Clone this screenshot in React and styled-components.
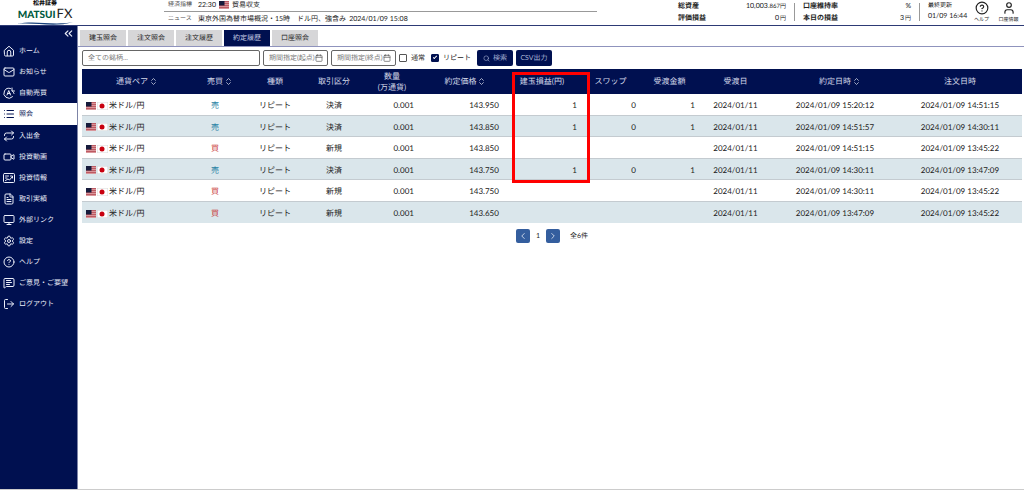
import React from "react";
import styled, { createGlobalStyle } from "styled-components";
import {
  Mail, List, Repeat, Video, FileText, Monitor, Settings, CircleHelp,
  MessageSquareText, LogOut, ChevronsLeft, ChevronLeft, ChevronRight,
  ChevronsUpDown, Calendar, Search, User,
} from "lucide-react";

const navy = "#001050";
const font = '"Lato", "Noto Sans CJK JP", sans-serif';

const GlobalStyle = createGlobalStyle`
  *, *::before, *::after { box-sizing: border-box; }
  body {
    margin: 0;
    background: #fff;
    color: #222;
    font: 7px/10px ${font};
    text-rendering: geometricPrecision;
  }
  button, input { font: inherit; text-rendering: inherit; }
  h1, ul { margin: 0; padding: 0; }
  svg { display: block; flex: none; }
`;

const Page = styled.div`
  min-height: 100vh;
  display: flex;
  flex-direction: column;
  border-bottom: 1px solid #ccc;
`;

const Header = styled.header`
  display: flex;
  justify-content: space-between;
  height: 26px;
  border-bottom: 1px solid #2d3a75;
`;

const Brand = styled.div`
  display: flex;
  flex: 0 0 164px;
`;

const Logo = styled.h1`
  width: 90px;
  display: flex;
  flex-direction: column;
  align-items: center;
  font-size: 6px;
  line-height: 7px;
  font-weight: 900;
  color: #111;
`;

const LogoName = styled.span`
  display: flex;
  align-items: baseline;
  gap: 1px;
  font: 900 10px/12px ${font};
  color: #005a40;
`;

const LogoSuffix = styled.span`
  font: 400 13px/12px ${font};
  color: #222;
`;

const Ticker = styled.div`
  flex: 0 1 433px;
  margin-right: auto;
  white-space: nowrap;
`;

const TickerRow = styled.div`
  display: flex;
  align-items: center;
  gap: 3px;
  height: ${(p) => (p.$first ? 12 : 14)}px;
  padding: ${(p) => (p.$first ? "0 4px 2px" : "0 4px")};
  border-bottom: ${(p) => (p.$first ? "1px solid #999" : "0")};
`;

const TickerLabel = styled.span`
  width: 27px;
  font-size: 6px;
  color: #555;
`;

const Status = styled.div`
  display: flex;
  align-items: flex-start;
  padding-right: 2px;
  white-space: nowrap;
`;

const StatGroup = styled.dl`
  display: grid;
  grid-template-columns: auto 1fr;
  grid-auto-rows: 12px;
  width: ${(p) => p.$width}px;
  margin: 0;
  padding: 1px 8px 0 0;
  dt { font-weight: 700; }
  dd { margin: 0; text-align: right; }
  small { font-size: 6px; }
`;

const Unit = styled.small`
  margin-left: 1px;
`;

const Divider = styled.span`
  width: 1px;
  height: 18px;
  margin: 3px 8px 0 0;
  background: #999;
`;

const Updated = styled.div`
  width: 40px;
  padding-top: 1px;
  line-height: 10px;
  small { display: block; font-size: 6px; }
`;

const HeaderButton = styled.button`
  display: flex;
  flex-direction: column;
  align-items: center;
  gap: 2px;
  width: 27px;
  padding: 1px 0 0;
  border: 0;
  background: none;
  color: #222;
  font-size: 5px;
  line-height: 7px;
`;

const Body = styled.div`
  flex: 1;
  display: flex;
`;

const Sidebar = styled.nav`
  flex: 0 0 78px;
  border-right: 1px solid #7d84a6;
  background: ${navy};
  color: #eceffa;
  ul { list-style: none; }
`;

const Collapse = styled.button`
  display: block;
  margin-left: auto;
  height: 14px;
  padding: 0 2px;
  border: 0;
  background: none;
  color: inherit;
`;

const NavLink = styled.a`
  display: flex;
  align-items: center;
  gap: 4px;
  height: ${(p) => (p.$active ? 22 : 21)}px;
  padding-left: 3px;
  color: ${(p) => (p.$active ? navy : "inherit")};
  background: ${(p) => (p.$active ? "#fff" : "none")};
  text-decoration: none;
`;

const Main = styled.main`
  flex: 1;
  min-width: 0;
`;

const Tabs = styled.div`
  display: flex;
  gap: 2px;
  padding: 4px 2px 0;
  border-bottom: 1px solid #8f93bd;
`;

const Tab = styled.button`
  width: 46px;
  height: 16px;
  padding: 0;
  border: 0;
  background: ${(p) => (p.$active ? navy : "#d6d6d8")};
  color: ${(p) => (p.$active ? "#c9d0e8" : "#222")};
`;

const Filters = styled.form`
  display: flex;
  align-items: center;
  gap: 3px;
  padding: 3px 4px;
`;

const Field = styled.label`
  display: flex;
  align-items: center;
  width: ${(p) => p.$width}px;
  height: 16px;
  padding: 0 4px 0 5px;
  border: 1px solid #666;
  border-radius: 2px;
  color: #555;
  input {
    flex: 1;
    min-width: 0;
    padding: 0;
    border: 0;
    outline: 0;
    background: none;
  }
  input::placeholder { color: #777; }
`;

const Check = styled.label`
  display: flex;
  align-items: center;
  gap: 4px;
  margin-right: 3px;
  input {
    appearance: none;
    width: 8px;
    height: 8px;
    margin: 0;
    border: 1px solid #555;
    border-radius: 1px;
    background: #fff;
  }
  input:checked {
    border-color: ${navy};
    background: ${navy};
  }
  input:checked::after {
    content: "";
    display: block;
    width: 2px;
    height: 4px;
    margin: 0 2px;
    border: solid #fff;
    border-width: 0 1px 1px 0;
    transform: rotate(45deg);
  }
`;

const Action = styled.button`
  display: flex;
  align-items: center;
  justify-content: center;
  gap: 3px;
  width: 36px;
  height: 16px;
  padding: 0;
  border: 0;
  border-radius: 2px;
  background: ${navy};
  color: #a9b4d6;
`;

const TableArea = styled.div`
  position: relative;
  margin: 0 2px 0 4px;
`;

const Table = styled.table`
  width: 100%;
  table-layout: fixed;
  border-collapse: separate;
  border-spacing: 0;
  font-size: 8px;
  line-height: 11px;
  text-align: center;
  white-space: nowrap;
  th {
    height: 25px;
    padding: 0;
    background: ${navy};
    color: #d5daea;
    font-weight: 400;
  }
  td {
    height: 22px;
    padding: 2px 4px 0;
    border-bottom: 1px solid #c4cbd0;
  }
  tbody tr:nth-child(even) td {
    height: 21px;
    background: #dae6eb;
  }
  tbody tr:last-child td { border-bottom: 0; }
`;

const HeadLabel = styled.span`
  display: inline-flex;
  align-items: center;
  white-space: pre-line;
  svg { margin: 0 -10px 0 1px; }
`;

const NumberCell = styled.td`
  text-align: right;
`;

const SideCell = styled.td`
  color: ${(p) => (p.$buy ? "#c62a2a" : "#1d7fa3")};
`;

const Pair = styled.span`
  display: flex;
  align-items: center;
  gap: 1px;
`;

const Highlight = styled.div`
  position: absolute;
  top: 3px;
  left: 45.7%;
  width: 8.3%;
  height: 111px;
  border: 3px solid #f00;
  pointer-events: none;
`;

const Pager = styled.div`
  display: flex;
  align-items: center;
  justify-content: center;
  gap: 6px;
  margin: 6px 2px 0 4px;
`;

const PageButton = styled.button`
  display: flex;
  align-items: center;
  justify-content: center;
  width: 14px;
  height: 14px;
  padding: 0;
  border: 0;
  border-radius: 2px;
  background: #345e9e;
  color: #dfe6f3;
`;

const Total = styled.span`
  margin-left: 4px;
`;

function UsFlag() {
  return (
    <svg width="10" height="8" viewBox="0 0 20 16" aria-label="US">
      <rect width="20" height="16" fill="#d9969b" />
      <path d="M0 1h20M0 5h20M0 9h20M0 13h20" stroke="#bd5a62" strokeWidth="2" />
      <rect width="11" height="9" fill="#161b3c" />
    </svg>
  );
}

function JpFlag() {
  return (
    <svg width="11" height="8" viewBox="0 0 22 16" aria-label="JP">
      <rect x=".5" y=".5" width="21" height="15" fill="#fff" stroke="#d8d8d8" />
      <circle cx="10" cy="8" r="5" fill="#c8000f" />
    </svg>
  );
}

function Icon24({ size, children }) {
  return (
    <svg width={size} height={size} viewBox="0 0 24 24" fill="none" stroke="currentColor" strokeWidth="2" strokeLinecap="round" strokeLinejoin="round">
      {children}
    </svg>
  );
}

function Home({ size }) {
  return (
    <Icon24 size={size}>
      <path d="M3 10.5 12 2.5l9 8V20a2 2 0 0 1-2 2H5a2 2 0 0 1-2-2Z" />
      <path d="M8.5 21.5V14a3.5 3.5 0 0 1 7 0v7.500" />
    </Icon24>
  );
}

function AutoTrade({ size }) {
  return (
    <Icon24 size={size}>
      <path d="M15 3A10 10 0 1 0 19 19.500" />
      <path d="M18 2v6h5M18 8c2 1 3.500 3 4 5" />
      <path d="M8 16l3.500-9 3.500 9M9 13h5" />
    </Icon24>
  );
}

function NewsBoard({ size }) {
  return (
    <Icon24 size={size}>
      <rect x="1" y="3" width="22" height="18" rx="2" />
      <path d="M5 8h6M5 12h3M5 17l5-3 3 2 6-7M15 8h4v4" />
    </Icon24>
  );
}

const menu = [
  ["ホーム", Home], ["お知らせ", Mail], ["自動売買", AutoTrade], ["照会", List],
  ["入出金", Repeat], ["投資動画", Video], ["投資情報", NewsBoard], ["取引実績", FileText],
  ["外部リンク", Monitor], ["設定", Settings], ["ヘルプ", CircleHelp],
  ["ご意見・ご要望", MessageSquareText], ["ログアウト", LogOut],
];

const tabs = ["建玉照会", "注文照会", "注文履歴", "約定履歴", "口座照会"];

const columns = [
  ["通貨ペア", 10.64, true], ["売買", 7.02, true], ["種類", 5.74], ["取引区分", 6.81],
  ["数量\n(万通貨)", 5.53], ["約定価格", 9.04, true], ["建玉損益(円)", 8.3], ["スワップ", 6.28],
  ["受渡金額", 6.28], ["受渡日", 7.77], ["約定日時", 13.4, true], ["注文日時", 13.19],
];

const trades = [
  ["売", "決済", "143.950", "1", "0", "1", "15:20:12", "14:51:15"],
  ["売", "決済", "143.850", "1", "0", "1", "14:51:57", "14:30:11"],
  ["買", "新規", "143.850", "", "", "", "14:51:15", "13:45:22"],
  ["売", "決済", "143.750", "1", "0", "1", "14:30:11", "13:47:09"],
  ["買", "新規", "143.750", "", "", "", "14:30:11", "13:45:22"],
  ["買", "新規", "143.650", "", "", "", "13:47:09", "13:45:22"],
];

export default function App() {
  return (
    <Page>
      <GlobalStyle />
      <Header>
        <Brand>
          <Logo>
            松井証券
            <LogoName>MATSUI<LogoSuffix>FX</LogoSuffix></LogoName>
            <svg width="56" height="5" viewBox="0 0 56 5">
              <path d="M0 3C18-1 36 5 56 1C38 7 18 1 0 3Z" fill="#17407c" />
            </svg>
          </Logo>
        </Brand>
        <Ticker>
          <TickerRow $first>
            <TickerLabel>経済指標</TickerLabel>
            <span>22:30</span>
            <UsFlag />
            <span>貿易収支</span>
          </TickerRow>
          <TickerRow>
            <TickerLabel>ニュース</TickerLabel>
            <span>東京外国為替市場概況・15時　ドル円、強含み</span>
            <span>2024/01/09 15:08</span>
          </TickerRow>
        </Ticker>
        <Status>
          <StatGroup $width={116}>
            <dt>総資産</dt><dd>10,003.<small>867円</small></dd>
            <dt>評価損益</dt><dd>0<Unit>円</Unit></dd>
          </StatGroup>
          <Divider />
          <StatGroup $width={116}>
            <dt>口座維持率</dt><dd>%</dd>
            <dt>本日の損益</dt><dd>3<Unit>円</Unit></dd>
          </StatGroup>
          <Divider />
          <Updated><small>最終更新</small>01/09 16:44</Updated>
          <HeaderButton><CircleHelp size={14} />ヘルプ</HeaderButton>
          <HeaderButton><User size={14} />口座情報</HeaderButton>
        </Status>
      </Header>
      <Body>
        <Sidebar>
          <Collapse aria-label="メニューを閉じる"><ChevronsLeft size={13} /></Collapse>
          <ul>
            {menu.map(([label, Icon]) => (
              <li key={label}>
                <NavLink href="#" $active={label === "照会"}>
                  <Icon size={12} />
                  {label}
                </NavLink>
              </li>
            ))}
          </ul>
        </Sidebar>
        <Main>
          <Tabs>
            {tabs.map((t) => <Tab key={t} $active={t === "約定履歴"}>{t}</Tab>)}
          </Tabs>
          <Filters>
            <Field $width={178}><input placeholder="全ての銘柄..." aria-label="銘柄" /></Field>
            <Field $width={65}><input placeholder="期間指定(起点)" aria-label="起点" /><Calendar size={8} /></Field>
            <Field $width={65}><input placeholder="期間指定(終点)" aria-label="終点" /><Calendar size={8} /></Field>
            <Check><input type="checkbox" />通常</Check>
            <Check><input type="checkbox" defaultChecked />リピート</Check>
            <Action type="button"><Search size={7} />検索</Action>
            <Action type="button">CSV出力</Action>
          </Filters>
          <TableArea>
            <Table>
              <colgroup>
                {columns.map(([name, width]) => <col key={name} width={`${width}%`} />)}
              </colgroup>
              <thead>
                <tr>
                  {columns.map(([name, , sortable]) => (
                    <th key={name} scope="col">
                      <HeadLabel>
                        {name}
                        {sortable && <ChevronsUpDown size={9} />}
                      </HeadLabel>
                    </th>
                  ))}
                </tr>
              </thead>
              <tbody>
                {trades.map(([side, kind, price, profit, swap, amount, filled, ordered], i) => (
                  <tr key={i}>
                    <td><Pair><UsFlag /><JpFlag /><span>米ドル/円</span></Pair></td>
                    <SideCell $buy={side === "買"}>{side}</SideCell>
                    <td>リピート</td>
                    <td>{kind}</td>
                    <NumberCell>0.001</NumberCell>
                    <NumberCell>{price}</NumberCell>
                    <NumberCell>{profit}</NumberCell>
                    <NumberCell>{swap}</NumberCell>
                    <NumberCell>{amount}</NumberCell>
                    <td>2024/01/11</td>
                    <td>2024/01/09 {filled}</td>
                    <td>2024/01/09 {ordered}</td>
                  </tr>
                ))}
              </tbody>
            </Table>
            <Highlight />
          </TableArea>
          <Pager>
            <PageButton aria-label="前へ"><ChevronLeft size={10} /></PageButton>
            <span>1</span>
            <PageButton aria-label="次へ"><ChevronRight size={10} /></PageButton>
            <Total>全6件</Total>
          </Pager>
        </Main>
      </Body>
    </Page>
  );
}
